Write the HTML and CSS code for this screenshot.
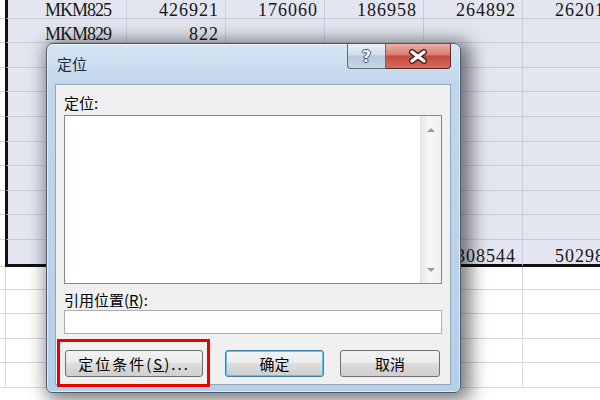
FILE: index.html
```html
<!DOCTYPE html>
<html>
<head>
    <title>定位</title>
    <link rel="stylesheet" href="styles.css">
</head>
<body>
    <div class="sheet">
        <div class="row sel"><span class="gut"></span><span class="c a">MKM825</span><span class="c">426921</span><span class="c">176060</span><span class="c">186958</span><span class="c">264892</span><span class="c">262013</span></div>
        <div class="row sel"><span class="gut"></span><span class="c a">MKM829</span><span class="c">822</span><span class="c"></span><span class="c"></span><span class="c"></span><span class="c"></span></div>
        <div class="row sel"><span class="gut"></span><span class="c a"></span><span class="c"></span><span class="c"></span><span class="c"></span><span class="c"></span><span class="c"></span></div>
        <div class="row sel"><span class="gut"></span><span class="c a"></span><span class="c"></span><span class="c"></span><span class="c"></span><span class="c"></span><span class="c"></span></div>
        <div class="row sel"><span class="gut"></span><span class="c a"></span><span class="c"></span><span class="c"></span><span class="c"></span><span class="c"></span><span class="c"></span></div>
        <div class="row sel"><span class="gut"></span><span class="c a"></span><span class="c"></span><span class="c"></span><span class="c"></span><span class="c"></span><span class="c"></span></div>
        <div class="row sel"><span class="gut"></span><span class="c a"></span><span class="c"></span><span class="c"></span><span class="c"></span><span class="c"></span><span class="c"></span></div>
        <div class="row sel"><span class="gut"></span><span class="c a"></span><span class="c"></span><span class="c"></span><span class="c"></span><span class="c"></span><span class="c"></span></div>
        <div class="row sel"><span class="gut"></span><span class="c a"></span><span class="c"></span><span class="c"></span><span class="c"></span><span class="c"></span><span class="c"></span></div>
        <div class="row sel"><span class="gut"></span><span class="c a"></span><span class="c"></span><span class="c"></span><span class="c"></span><span class="c"></span><span class="c"></span></div>
        <div class="row sel last"><span class="gut"></span><span class="c a"></span><span class="c"></span><span class="c"></span><span class="c"></span><span class="c">308544</span><span class="c">502981</span></div>
        <div class="row first-below"><span class="gut"></span><span class="c a"></span><span class="c"></span><span class="c"></span><span class="c"></span><span class="c"></span><span class="c"></span></div>
        <div class="row"><span class="gut"></span><span class="c a"></span><span class="c"></span><span class="c"></span><span class="c"></span><span class="c"></span><span class="c"></span></div>
        <div class="row"><span class="gut"></span><span class="c a"></span><span class="c"></span><span class="c"></span><span class="c"></span><span class="c"></span><span class="c"></span></div>
        <div class="row"><span class="gut"></span><span class="c a"></span><span class="c"></span><span class="c"></span><span class="c"></span><span class="c"></span><span class="c"></span></div>
        <div class="row"><span class="gut"></span><span class="c a"></span><span class="c"></span><span class="c"></span><span class="c"></span><span class="c"></span><span class="c"></span></div>
    </div>

    <div class="dlg">
        <div class="titlebar">
            <span class="title">定位</span>
            <div class="tbtns">
                <span class="tb help">?</span>
                <span class="tb close">
                    <svg width="20" height="15" viewBox="0 0 20 15">
                        <path d="M4 3 L16 12 M16 3 L4 12" stroke="#4a2019" stroke-width="6" stroke-linecap="round"/>
                        <path d="M4 3 L16 12 M16 3 L4 12" stroke="#fff" stroke-width="3.4" stroke-linecap="round"/>
                    </svg>
                </span>
            </div>
        </div>
        <div class="client">
            <div class="lbl">定位:</div>
            <div class="list">
                <div class="vscroll">
                    <span class="arr up"></span>
                    <span class="arr down"></span>
                </div>
            </div>
            <div class="lbl ref">引用位置(<u>R</u>):</div>
            <div class="field"></div>
            <div class="btns">
                <span class="btn wide">定位条件(<u>S</u>)...</span>
                <span class="btn def">确定</span>
                <span class="btn cancel">取消</span>
            </div>
        </div>
        <div class="mark"></div>
    </div>
</body>
</html>
```

FILE: styles.css
```css
body {
    margin: 0;
    width: 600px;
    height: 400px;
    overflow: hidden;
    background-color: #fff;
    position: relative;
}
.sheet {
    margin-top: -6px;
    width: 622px;
    font-family: "Liberation Serif", serif;
}
.row {
    display: flex;
    height: 24.6px;
}
.gut {
    flex: none;
    width: 5px;
    border-bottom: 1px solid #d6d9e0;
}
.c {
    flex: none;
    width: 99px;
    box-sizing: border-box;
    border-right: 1px solid #d6d9e0;
    border-bottom: 1px solid #d6d9e0;
    display: flex;
    align-items: flex-end;
    justify-content: flex-end;
    padding: 0 6px 1px 0;
    font-size: 18px;
    line-height: 13px;
    letter-spacing: 1px;
    color: #161616;
}
.c.a {
    width: 122px;
    border-left: 1px solid #d6d9e0;
    justify-content: flex-start;
    padding-left: 37px;
    letter-spacing: -1px;
}
.sel .c {
    background-color: #e3e5f0;
    border-right-color: #c9ccd8;
    border-bottom-color: #c9ccd8;
}
.sel .c.a {
    border-left: 3px solid #111;
}
.sel.last {
    height: 26.6px;
}
.sel.last .c {
    border-bottom: 3px solid #111;
}
.first-below {
    height: 23px;
}

/* dialog */
.dlg {
    position: absolute;
    left: 46px;
    top: 43px;
    width: 415px;
    height: 350px;
    box-sizing: border-box;
    border: 1px solid #4b5969;
    border-radius: 7px 7px 6px 6px;
    padding: 0 9px 7px 8px;
    background: linear-gradient(to bottom, #d6e5f4 0, #c1d6ec 40px, #b6cfe8 100%);
    box-shadow: 5px 3px 18px 5px rgba(0, 0, 0, 0.5), inset 0 0 0 1px rgba(255, 255, 255, 0.55);
    display: flex;
    flex-direction: column;
    font-family: "Noto Sans CJK SC", sans-serif;
}
.titlebar {
    flex: none;
    height: 40px;
    display: flex;
    align-items: flex-start;
}
.title {
    margin: 9px 0 0 2px;
    font-size: 15px;
    line-height: 22px;
    color: #1c2634;
}
.tbtns {
    margin-left: auto;
    display: flex;
}
.tb {
    height: 25px;
    box-sizing: border-box;
    display: flex;
    align-items: center;
    justify-content: center;
}
.help {
    width: 39px;
    border: 1px solid #5d6c7c;
    border-top: none;
    border-radius: 0 0 0 4px;
    background: linear-gradient(to bottom, #e6eef6 0, #d2deea 45%, #b7c8da 50%, #c9d6e4 100%);
    font: bold 16px "DejaVu Sans", sans-serif;
    color: #eef3f8;
    text-shadow: 1px 0 0 #46566a, -1px 0 0 #46566a, 0 1px 0 #46566a, 0 -1px 0 #46566a;
}
.close {
    width: 65px;
    border: 1px solid #5a2c26;
    border-top: none;
    border-left: none;
    border-radius: 0 0 4px 0;
    background: linear-gradient(to bottom, #eab0a6 0, #d97e70 45%, #c54a3b 50%, #d46e5e 100%);
}
.client {
    flex: 1;
    background-color: #f0f0f0;
    border: 1px solid #95a6b9;
    padding: 8px 8px 0 8px;
    font-size: 15px;
    color: #000;
}
.lbl {
    height: 20px;
    line-height: 20px;
}
.lbl.ref {
    margin-top: 6px;
}
.list {
    margin-top: 2px;
    height: 169px;
    box-sizing: border-box;
    border: 1px solid #85898f;
    background-color: #fff;
    display: flex;
    justify-content: flex-end;
}
.vscroll {
    width: 21px;
    box-sizing: border-box;
    border-left: 1px solid #e2e2e2;
    background: linear-gradient(to right, #e8e8e8, #f7f7f7 40%, #efefef);
    display: flex;
    flex-direction: column;
    justify-content: space-between;
    align-items: center;
    padding: 12px 0 11px;
}
.arr {
    width: 0;
    height: 0;
    border-left: 4px solid transparent;
    border-right: 4px solid transparent;
}
.arr.up {
    border-bottom: 4px solid #9b9b9b;
}
.arr.down {
    border-top: 4px solid #9b9b9b;
}
.field {
    height: 24px;
    box-sizing: border-box;
    border: 1px solid #a9adb5;
    background-color: #fff;
}
.btns {
    display: flex;
    margin-top: 16px;
}
.btn {
    height: 27px;
    box-sizing: border-box;
    border: 1px solid #707070;
    border-radius: 3px;
    background: linear-gradient(to bottom, #f3f3f3 0, #ebebeb 50%, #dddddd 50%, #cfcfcf 100%);
    display: flex;
    align-items: center;
    justify-content: center;
    font-size: 15px;
}
.btn.wide {
    width: 138px;
    margin-left: 1px;
    letter-spacing: 2px;
}
.btn.def {
    width: 99px;
    margin-left: 22px;
    border-color: #3c7fb1;
    box-shadow: inset 0 0 0 1px #62c2ef;
}
.btn.cancel {
    width: 100px;
    margin-left: 16px;
}
.mark {
    position: absolute;
    left: 10px;
    top: 295px;
    width: 153px;
    height: 48px;
    box-sizing: border-box;
    border: 3px solid #ec0000;
}
```
